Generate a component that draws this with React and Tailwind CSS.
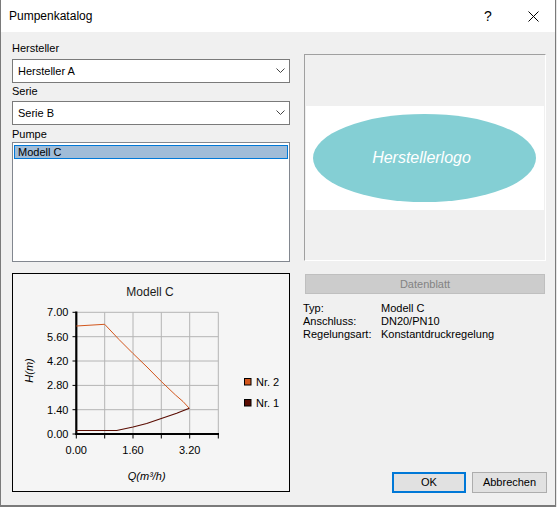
import { useState } from 'react'

const font = "font-['Liberation_Sans',Arial,sans-serif]"

function Chevron() {
  return (
    <svg width="9" height="6" viewBox="0 0 9 6" className="shrink-0">
      <polyline points="0.5,0.5 4.5,4.5 8.5,0.5" fill="none" stroke="#444" strokeWidth="1" />
    </svg>
  )
}

function Combo({ value }) {
  return (
    <div className="flex h-[24px] items-center justify-between border border-[#7a7a7a] bg-white pl-[5px] pr-[4px] text-[11px] text-black">
      <span>{value}</span>
      <Chevron />
    </div>
  )
}

function Label({ children, className = '' }) {
  return <div className={`h-[13px] text-[11px] leading-[13px] text-black ${className}`}>{children}</div>
}

// pump curves in page coordinates (viewBox of the chart svg matches the panel position)
const xs = [76.3, 104.7, 133, 161.3, 189.7, 218.3]
const ys = [
  { y: 434, label: '0.00' },
  { y: 409.7, label: '1.40' },
  { y: 385.4, label: '2.80' },
  { y: 361, label: '4.20' },
  { y: 336.7, label: '5.60' },
  { y: 312.3, label: '7.00' },
]
const curve2 = '76.3,326 104.7,324.3 119,339.5 133,353.5 147,367 161.3,381.5 175.5,395 183,401.5 189.3,408.3'
const curve1 = '76.3,430.5 116.7,430.5 133,427 146.7,423.5 161.3,418.5 176.7,413.3 189.3,408.3'

function Chart() {
  return (
    <div className="h-[219px] border border-black bg-[#f5f5f5]">
      <svg width="276" height="217" viewBox="13 274 276 217" className="block">
        <text x="150" y="296" textAnchor="middle" fontSize="12" fill="#1a1a1a" fontFamily="Liberation Sans, Arial, sans-serif">
          Modell C
        </text>
        {xs.slice(1).map((x) => (
          <line key={x} x1={x} y1="312.3" x2={x} y2="434" stroke="#b4b4b4" strokeWidth="1" />
        ))}
        {ys.slice(1).map((r) => (
          <line key={r.y} x1="76.3" y1={r.y} x2="218.3" y2={r.y} stroke="#b4b4b4" strokeWidth="1" />
        ))}
        {xs.map((x) => (
          <line key={'t' + x} x1={x} y1="434" x2={x} y2="438.5" stroke="#000" strokeWidth="1" />
        ))}
        {ys.map((r) => (
          <line key={'t' + r.y} x1="72.5" y1={r.y} x2="76.3" y2={r.y} stroke="#000" strokeWidth="1" />
        ))}
        <line x1="76.3" y1="311.5" x2="76.3" y2="435" stroke="#000" strokeWidth="2.2" />
        <line x1="75.5" y1="434" x2="219" y2="434" stroke="#000" strokeWidth="2.2" />
        <polyline points={curve2} fill="none" stroke="#d2561c" strokeWidth="1" />
        <polyline points={curve1} fill="none" stroke="#5a0c02" strokeWidth="1.2" />
        <g fontSize="11" fill="#000" fontFamily="Liberation Sans, Arial, sans-serif">
          {ys.map((r) => (
            <text key={'l' + r.y} x="68.5" y={r.y + 4} textAnchor="end">
              {r.label}
            </text>
          ))}
          {[
            [76.3, '0.00'],
            [133, '1.60'],
            [189.7, '3.20'],
          ].map(([x, l]) => (
            <text key={l} x={x} y="453.5" textAnchor="middle">
              {l}
            </text>
          ))}
          <text x="146.7" y="480" textAnchor="middle" fontStyle="italic">
            Q(m³/h)
          </text>
          <text x="0" y="0" textAnchor="middle" fontStyle="italic" transform="translate(32.5 370.5) rotate(-90)">
            H(m)
          </text>
          <rect x="244.5" y="378.5" width="6.5" height="6.5" fill="#d2561c" stroke="#000" strokeWidth="1" />
          <text x="256" y="386.3">Nr. 2</text>
          <rect x="244.5" y="399.5" width="6.5" height="6.5" fill="#5a0c02" stroke="#000" strokeWidth="1" />
          <text x="256" y="407.3">Nr. 1</text>
        </g>
      </svg>
    </div>
  )
}

export default function App() {
  const [selected] = useState('Modell C')

  return (
    <div className={`h-[507px] w-[557px] bg-[#e6e6e6] ${font}`}>
      <div className="flex h-[507px] w-[556px] flex-col border-x border-b-2 border-[#7a7a7a] bg-[#f0f0f0]">
        {/* title bar */}
        <div className="flex h-[32px] shrink-0 items-center bg-white pl-[8px] text-[12px] text-black">
          <span className="flex-1">Pumpenkatalog</span>
          <span className="w-[14px] text-center text-[14px] leading-none">?</span>
          <svg width="11" height="11" viewBox="0 0 11 11" className="ml-[33px] mr-[16px]">
            <path d="M0.5 0.5 L10.5 10.5 M10.5 0.5 L0.5 10.5" stroke="#000" strokeWidth="1" />
          </svg>
        </div>

        <div className="flex flex-1 pl-[11px] pb-[12px]">
          {/* left column */}
          <div className="w-[278px] pt-[10px]">
            <Label>Hersteller</Label>
            <div className="mt-[4px]">
              <Combo value="Hersteller A" />
            </div>
            <Label className="mt-[2px]">Serie</Label>
            <div className="mt-[3px]">
              <Combo value="Serie B" />
            </div>
            <Label className="mt-[3px]">Pumpe</Label>
            <div className="mt-[1px] h-[120px] border border-[#82878f] bg-white px-[1px] pt-[2px]">
              <div className="flex h-[14px] items-center border border-[#0078d7] bg-[#a0bcd8] pl-[3px] text-[11px] text-black">
                {selected}
              </div>
            </div>
            <div className="mt-[11px]">
              <Chart />
            </div>
          </div>

          {/* right column */}
          <div className="ml-[14px] flex w-[242px] flex-col">
            <div className="mt-[22px] flex h-[207px] items-center border border-t-[#a0a0a0] border-l-[#a0a0a0] border-r-white border-b-white bg-[#f0f0f0] px-[1px]">
              <div className="flex h-[104px] w-full items-center bg-white pl-[7px]">
                <div className="flex h-[88px] w-[223px] items-center justify-center rounded-[50%] bg-[#84cfd4] pr-[6px] text-[16px] italic text-white">
                  Herstellerlogo
                </div>
              </div>
            </div>
            <div className="ml-[1px] mt-[13px] flex h-[20px] w-[240px] items-center justify-center border border-[#bfbfbf] bg-[#cccccc] text-[11px] text-[#838383]">
              Datenblatt
            </div>
            <div className="-ml-[1px] mt-[8px] text-[11px] leading-[13px] text-black">
              {[
                ['Typ:', 'Modell C'],
                ['Anschluss:', 'DN20/PN10'],
                ['Regelungsart:', 'Konstantdruckregelung'],
              ].map(([k, v]) => (
                <div key={k} className="flex">
                  <span className="w-[78px]">{k}</span>
                  <span>{v}</span>
                </div>
              ))}
            </div>
            <div className="-mr-[1px] mt-auto flex justify-end gap-[6px]">
              <button className="flex h-[21px] w-[74px] items-center justify-center border-2 border-[#0078d7] bg-[#e1e1e1] text-[11px] text-black">
                OK
              </button>
              <button className="flex h-[21px] w-[75px] items-center justify-center border border-[#adadad] bg-[#e1e1e1] text-[11px] text-black">
                Abbrechen
              </button>
            </div>
          </div>
        </div>
      </div>
    </div>
  )
}
